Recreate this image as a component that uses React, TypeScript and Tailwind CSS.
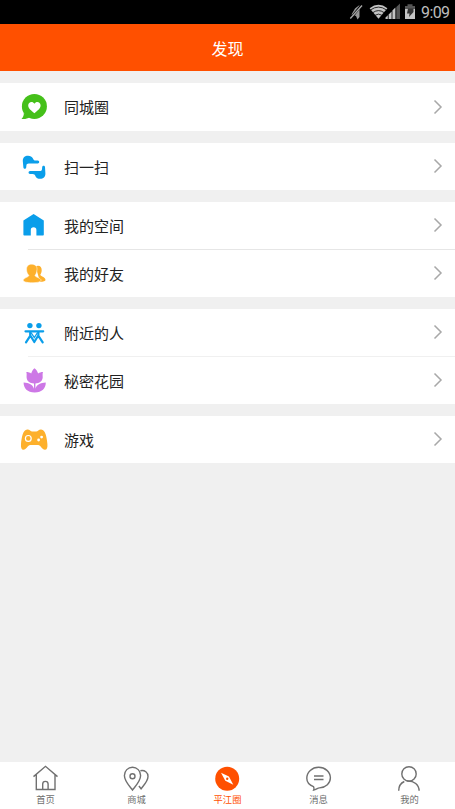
import React from "react";

type IconProps = { children: React.ReactNode };

const Icon: React.FC<IconProps> = ({ children }) => (
  <svg width="28" height="28" viewBox="0 0 28 28" fill="none" className="block shrink-0">
    {children}
  </svg>
);

const CircleIcon = () => (
  <Icon>
    <circle cx="14.4" cy="13.4" r="12.5" fill="#45c01a" />
    <path d="M3.800 20c.2 2.600-.8 4.400-2.300 5.900 3 .5 6-.2 8.300-1.600Z" fill="#45c01a" />
    <path
      d="M14.400 20.200c-3.300-2.500-6.200-4.700-6.200-7.600 0-3.900 4.500-4.900 6.200-1.800 1.700-3.100 6.200-2.100 6.200 1.800 0 2.900-2.900 5.100-6.200 7.600Z"
      fill="#fff"
    />
  </Icon>
);

const ScanIcon = () => (
  <Icon>
    <path
      d="M2.800 8c0-3.400 2-5.200 5.300-5.200 2.300 0 3.900.9 4.700 2.400.7 1.500 1.300 2.300 2.800 2.300h2.200c1.900 0 1.900 3 0 3H8.700c-1.300 0-2.200.7-2.300 1.900l-.2 2.200c-.3 1.800-2.600 1.600-2.800-.1L2.800 8Z"
      fill="#0a9eea"
    />
    <path
      d="M25.400 20.500c0 3.500-2 5.300-5.300 5.300-2.300 0-3.700-.9-4.500-2.400-.7-1.500-1.500-2.300-3-2.300H10c-1.900 0-1.900-3 0-3h9.700c1.300 0 2.200-.7 2.300-1.900l.2-2.300c.3-1.800 2.600-1.600 2.800.1l.4 6.500Z"
      fill="#0a9eea"
    />
  </Icon>
);

const SpaceIcon = () => (
  <Icon>
    <path
      d="M3.400 8.600 13.600 2 23.800 8.600V22.700q0 .8-.8.8H16.400V18a2.800 2.800 0 0 0-5.600 0v5.500H4.200q-.8 0-.8-.8Z"
      fill="#0a9eea"
    />
  </Icon>
);

const FriendsIcon = () => (
  <Icon>
    <path
      d="M15.500 6.300c3.800-1.600 6.400.3 6.200 4-.1 2-.6 3.300-1.400 4.500.1 1.700 4.900 2.200 5.200 4.900.2 1.500-2 2.100-5.500 2.100Z"
      fill="#fdb02c"
    />
    <path
      d="M11.700 4.200c3.700 0 5.600 2.400 5.300 5.400-.1 2.600-.9 4.500-2 5.700 0 2.200 6 2.400 6 4.900 0 1.800-3.900 2.500-8.800 2.500s-8.900-.7-8.900-2.500c0-2.500 5.600-2.700 5.600-4.900-1.400-1.200-2.100-3-2.300-5.100-.4-3.500 1.300-6 5.100-6Z"
      fill="#fdb02c"
      stroke="#fff"
      strokeWidth=".5"
    />
  </Icon>
);

const NearbyIcon = () => (
  <Icon>
    <circle cx="9.900" cy="6.600" r="2.700" fill="#0a9eea" />
    <circle cx="18.900" cy="6.600" r="2.700" fill="#0a9eea" />
    <path
      d="M5.500 12.300H23.200M10.200 12.500V16.800L6 23.400M10.500 16.800l3.800 6.200M18.400 12.500V16.800l4.300 6.600M18.100 16.800l-3.800 6.200"
      stroke="#0a9eea"
      strokeWidth="2.200"
      strokeLinecap="round"
      strokeLinejoin="round"
    />
    <path d="M11 13.500 14.300 18.500l3.300-5" stroke="#0a9eea" strokeWidth="1.300" />
  </Icon>
);

const GardenIcon = () => (
  <Icon>
    <path
      d="M14.400 1.200c1.900 1.300 3.100 3 3.700 5.200 1.400-1 2.900-1.500 4.900-1.500-.7 2.200-.2 3.700-.3 5.600-.3 3.600-3.200 5.700-7.300 6v5.200c1.300-4.100 4.900-6 10.400-6.200-.1 6-3.700 9.900-11.100 9.900s-11-3.900-11.100-9.900c5.500.2 9.100 2.100 10.400 6.200v-5.200c-4.300-.3-7.100-2.400-7.400-6-.1-1.900.4-3.400-.3-5.600 2 0 3.600.5 4.900 1.500.6-2.200 1.800-3.900 3.200-5.200Z"
      fill="#cd78e6"
    />
  </Icon>
);

const GameIcon = () => (
  <Icon>
    <path
      d="M7.200 3.500c2.500-.2 3.300 2 5 2h4c1.700 0 2.500-2.200 5-2 4.400.4 5.600 8.200 6.200 14.500.3 3.500-.5 5.800-2.500 5.800-2.800 0-4.200-4.800-6.800-4.800h-7.800c-2.600 0-4 4.800-6.800 4.800-2 0-2.800-2.300-2.500-5.800.6-6.300 1.800-14.100 6.200-14.500Z"
      fill="#fdb02c"
    />
    <circle cx="8.300" cy="12.400" r="2.900" stroke="#fff" strokeWidth="1.200" />
    <circle cx="18.600" cy="14" r="1.400" fill="#fff" />
    <circle cx="21.600" cy="11.100" r="1.400" fill="#fff" />
  </Icon>
);

const groups = [
  [{ label: "同城圈", icon: <CircleIcon /> }],
  [{ label: "扫一扫", icon: <ScanIcon /> }],
  [
    { label: "我的空间", icon: <SpaceIcon /> },
    { label: "我的好友", icon: <FriendsIcon /> },
  ],
  [
    { label: "附近的人", icon: <NearbyIcon /> },
    { label: "秘密花园", icon: <GardenIcon /> },
  ],
  [{ label: "游戏", icon: <GameIcon /> }],
];

const tabs = [
  {
    label: "首页",
    icon: (
      <path d="M1.500 12.600 13.500 2.300 25.500 12.600M4.300 10.500v15H23v-15M10.700 25.500v-5.400a2.700 2.700 0 0 1 5.400 0v5.400" />
    ),
  },
  {
    label: "商城",
    icon: (
      <>
        <path d="M9.500 26C6 21.500 1.400 17 1.400 11.500a8.100 8.300 0 0 1 16.200 0C17.600 17 13 21.500 9.500 26Z" />
        <circle cx="9.500" cy="12.300" r="2.500" />
        <path d="M17.400 6.700c4.400-1 7.600 2 7.600 5.800 0 4.500-3.600 7.900-6.900 12.300L15.900 22" />
      </>
    ),
  },
  {
    label: "平江圈",
    active: true,
    icon: (
      <>
        <circle cx="13.200" cy="14.700" r="12" fill="#ff5000" stroke="none" />
        <path d="m7 8.700 7.900 3.900 4.400 8.200-8-4.100Z" fill="#fff" stroke="none" />
        <circle cx="13.200" cy="14.700" r="1.200" fill="#ff5000" stroke="none" />
      </>
    ),
  },
  {
    label: "消息",
    icon: (
      <path d="M8.500 22.600C4.400 21 1.800 17.900 1.800 14.200 1.800 8.100 7.100 3.300 13.600 3.300s11.800 4.700 11.800 10.500c0 5.400-4.500 9.800-10.900 10.100-2 .1-3.400 1.800-5.800 2.200.6-1.200.5-2.300-.2-3.500ZM9 12H18.500M9 15.500H18.500" />
    ),
  },
  {
    label: "我的",
    icon: (
      <>
        <circle cx="13" cy="9.900" r="7.200" />
        <path d="M2.700 26.800c0-4.300 2-7.700 5.600-9.300M10.700 17c7.500-.6 12.400 3.900 12.400 9.800" />
      </>
    ),
  },
];

const StatusBar = () => (
  <div className="flex h-6 shrink-0 items-center justify-end bg-black pr-[5px]">
    <svg width="68" height="24" viewBox="349 0 68 24" fill="none" className="block">
      {/* muted ringer */}
      <path d="M351.500 14.500 355 8.500l4.500-3.500v12l-2 2.500-1.500-3.500Z" fill="#999" />
      <path d="M361.500 5 350.500 18.800" stroke="#000" strokeWidth="2.400" />
      <path d="M362 5.500 350.300 18.500" stroke="#aaa" strokeWidth="1.300" />
      {/* wifi */}
      <path d="M369.600 8.200Q378.500 1.400 387.400 8.200L378.500 18.700Z" fill="#c4c4c4" />
      <path
        d="M370.700 9.800q7.800-5.400 15.600 0M372.900 12.600q5.600-4 11.200 0M375.200 15.200q3.300-2.200 6.600 0"
        stroke="#000"
        strokeWidth=".8"
      />
      {/* signal */}
      <path d="M385.500 19v-1.500l2.300-2.300V19ZM388.600 19v-4.600l3-3V19ZM392.400 19v-8.400l3-3V19Z" fill="#c4c4c4" />
      <path d="M396.300 19V7l3.700-3.500V19Z" fill="#555" />
      {/* battery */}
      <path d="M405 6h2.500V4.300h5V6h2.500v3h-10Z" fill="#555" />
      <path d="M405 9h10v10h-10Z" fill="#c4c4c4" />
      <path d="M408 8.500h5.500v3.500l-4.500 5 .5-3.500h-2.500Z" fill="#333" />
    </svg>
    <span className="ml-1 w-[29px] whitespace-nowrap pt-px font-['Roboto'] text-[16px] leading-6 tracking-[-0.6px] text-[#bdbdbd]">
      9:09
    </span>
  </div>
);

const Chevron = () => (
  <svg width="10" height="16" viewBox="0 0 10 16" fill="none" className="mb-px ml-auto mr-3 block">
    <path d="M1.500 1.500 8 8l-6.500 6.500" stroke="#a8a8a8" strokeWidth="1.500" />
  </svg>
);

export default function App() {
  return (
    <div className="flex h-[809px] w-[455px] flex-col overflow-hidden bg-[#f0f0f0] font-['Noto_Sans_CJK_SC',sans-serif]">
      <StatusBar />
      <header className="flex h-[47px] shrink-0 items-center justify-center bg-[#ff5000] text-[16px] text-white">
        <h1>发现</h1>
      </header>

      <main className="flex flex-1 flex-col gap-3 pt-3">
        {groups.map((rows, i) => (
          <section key={i} className="bg-white">
            {rows.map((row, j) => (
              <React.Fragment key={row.label}>
                {j > 0 && <div className={i === 3 ? "ml-7 h-px bg-[#f0f0f0]" : "ml-7 h-px bg-[#e6e6e6]"} />}
                <div className={i === 0 ? "flex h-12 items-center pl-5" : "flex h-[47px] items-center pl-5"}>
                  {row.icon}
                  <span className="ml-4 text-[15px] leading-5 text-[#222]">{row.label}</span>
                  <Chevron />
                </div>
              </React.Fragment>
            ))}
          </section>
        ))}
      </main>

      <nav className="grid h-[47px] shrink-0 grid-cols-5 bg-white">
        {tabs.map((tab) => (
          <div key={tab.label} className="flex flex-col items-center pt-0.5">
            <svg
              width="28"
              height="28"
              viewBox="0 0 28 28"
              fill="none"
              stroke="#707070"
              strokeWidth="1.400"
              className="block"
            >
              {tab.icon}
            </svg>
            <span
              className={
                tab.active
                  ? "text-[9.3px] leading-[14px] text-[#ff5000]"
                  : "text-[9.3px] leading-[14px] text-[#707070]"
              }
            >
              {tab.label}
            </span>
          </div>
        ))}
      </nav>
    </div>
  );
}
